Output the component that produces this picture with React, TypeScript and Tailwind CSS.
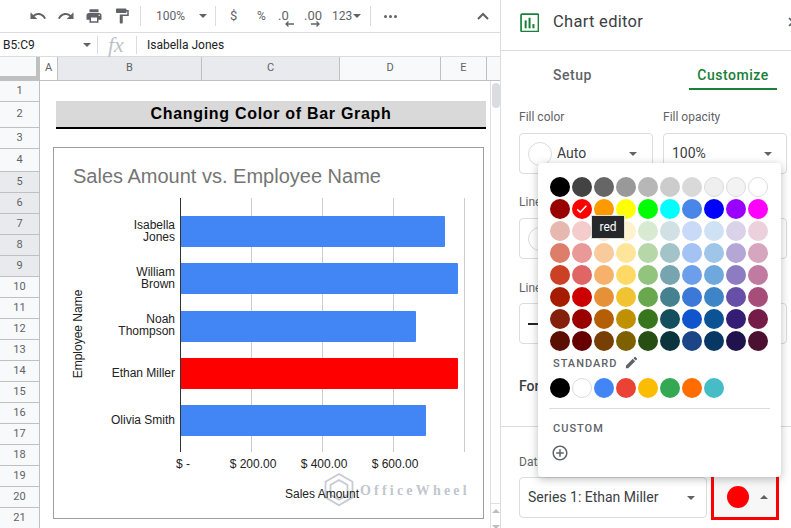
import React from "react";

const P = {
  undo: "M12.5 8c-2.65 0-5.05.99-6.9 2.6L2 7v9h9l-3.62-3.62c1.39-1.16 3.16-1.88 5.12-1.88 3.54 0 6.55 2.31 7.6 5.5l2.37-.78C21.08 11.03 17.15 8 12.5 8z",
  redo: "M18.4 10.6C16.55 8.99 14.15 8 11.5 8c-4.65 0-8.58 3.03-9.96 7.22L3.9 16c1.05-3.19 4.05-5.5 7.6-5.5 1.95 0 3.73.72 5.12 1.88L13 16h9V7l-3.6 3.6z",
  print: "M19 8H5c-1.66 0-3 1.34-3 3v6h4v4h12v-4h4v-6c0-1.66-1.34-3-3-3zm-3 11H8v-5h8v5zm3-7c-.55 0-1-.45-1-1s.45-1 1-1 1 .45 1 1-.45 1-1 1zm-1-9H6v4h12V3z",
  paint: "M18 4V3c0-.55-.45-1-1-1H5c-.55 0-1 .45-1 1v4c0 .55.45 1 1 1h12c.55 0 1-.45 1-1V6h1v4H9v11c0 .55.45 1 1 1h2c.55 0 1-.45 1-1v-9h8V4h-3z",
  edit: "M3 17.25V21h3.75L17.81 9.94l-3.75-3.75L3 17.25zM20.71 7.04c.39-.39.39-1.02 0-1.41l-2.34-2.34c-.39-.39-1.02-.39-1.41 0l-1.83 1.83 3.75 3.75 1.83-1.83z",
  add: "M13 7h-2v4H7v2h4v4h2v-4h4v-2h-4V7zm-1-5C6.48 2 2 6.48 2 12s4.48 10 10 10 10-4.48 10-10S17.52 2 12 2zm0 18c-4.41 0-8-3.59-8-8s3.59-8 8-8 8 3.59 8 8-3.59 8-8 8z",
};

function Icon({ d, size = 18, cls = "" }: { d: string; size?: number; cls?: string }) {
  return (
    <svg viewBox="0 0 24 24" width={size} height={size} className={"fill-[#5f6368] shrink-0 " + cls}>
      <path d={d} />
    </svg>
  );
}

const Caret = ({ cls = "" }: { cls?: string }) => (
  <span className={"block w-0 h-0 border-l-[4px] border-r-[4px] border-t-[4px] border-l-transparent border-r-transparent border-t-[#5f6368] shrink-0 " + cls} />
);

const Sep = ({ cls = "" }: { cls?: string }) => <span className={"block w-px h-[20px] bg-[#dadce0] shrink-0 " + cls} />;

const palette = [
  ["#000000", "#434343", "#666666", "#999999", "#b7b7b7", "#cccccc", "#d9d9d9", "#efefef", "#f3f3f3", "#ffffff"],
  ["#980000", "#ff0000", "#ff9900", "#ffff00", "#00ff00", "#00ffff", "#4a86e8", "#0000ff", "#9900ff", "#ff00ff"],
  ["#e6b8af", "#f4cccc", "#fce5cd", "#fff2cc", "#d9ead3", "#d0e0e3", "#c9daf8", "#cfe2f3", "#d9d2e9", "#ead1dc"],
  ["#dd7e6b", "#ea9999", "#f9cb9c", "#ffe599", "#b6d7a8", "#a2c4c9", "#a4c2f4", "#9fc5e8", "#b4a7d6", "#d5a6bd"],
  ["#cc4125", "#e06666", "#f6b26b", "#ffd966", "#93c47d", "#76a5af", "#6d9eeb", "#6fa8dc", "#8e7cc3", "#c27ba0"],
  ["#a61c00", "#cc0000", "#e69138", "#f1c232", "#6aa84f", "#45818e", "#3c78d8", "#3d85c6", "#674ea7", "#a64d79"],
  ["#85200c", "#990000", "#b45f06", "#bf9000", "#38761d", "#134f5c", "#1155cc", "#0b5394", "#351c75", "#741b47"],
  ["#5b0f00", "#660000", "#783f04", "#7f6000", "#274e13", "#0c343d", "#1c4587", "#073763", "#20124d", "#4c1130"],
];
const standard = ["#000000", "#ffffff", "#4285f4", "#ea4335", "#fbbc04", "#34a853", "#ff6d01", "#46bdc6"];

function Swatch({ c, checked }: { c: string; checked?: boolean }) {
  const light = ["#ffffff", "#f3f3f3", "#efefef", "#d9d9d9"].includes(c);
  return (
    <span
      className={"flex items-center justify-center w-[20px] h-[20px] rounded-full " + (light ? "border border-[#dadce0]" : "")}
      style={{ backgroundColor: c }}
    >
      {checked && (
        <svg viewBox="0 0 16 16" width="14" height="14" fill="none" stroke="#fff" strokeWidth="1.8">
          <path d="M2.5 8.5l3.5 3.2 7-7.5" />
        </svg>
      )}
    </span>
  );
}

const rows: [string, number, boolean][] = [
  ["1", 21, false], ["2", 26, false], ["3", 21, false], ["4", 23, false], ["5", 21, true], ["6", 21, true],
  ["7", 21, true], ["8", 21, true], ["9", 21, true], ["10", 21, false], ["11", 21, false], ["12", 21, false],
  ["13", 21, false], ["14", 21, false], ["15", 21, false], ["16", 21, false], ["17", 21, false], ["18", 21, false],
  ["19", 21, false], ["20", 21, false], ["21", 21, false],
];

const cols: [string, string, string][] = [
  ["A", "w-[18px]", "bg-white"],
  ["B", "w-[144px]", "bg-[#e8eaed]"],
  ["C", "w-[138px]", "bg-[#e8eaed]"],
  ["D", "w-[101px]", "bg-[#f8f9fa]"],
  ["E", "w-[46px]", "bg-[#f8f9fa]"],
];

function Chart() {
  const bars: [number, number, string][] = [
    [216, 445, "#4285f4"],
    [263, 458, "#4285f4"],
    [311, 416, "#4285f4"],
    [358, 458, "#ff0000"],
    [405, 426, "#4285f4"],
  ];
  const ox = 53;
  const oy = 147;
  const labels: [string, number][] = [
    ["Isabella", 229], ["Jones", 241], ["William", 276], ["Brown", 288], ["Noah", 323], ["Thompson", 335], ["Ethan Miller", 377], ["Olivia Smith", 424],
  ];
  const ticks: [string, number][] = [["$ 200.00", 253], ["$ 400.00", 324], ["$ 600.00", 395]];
  return (
    <svg width="431" height="372" viewBox={`${ox} ${oy} 431 372`} className="block" style={{ fontFamily: '"Liberation Sans", Arial, sans-serif' }}>
      <rect x="53.5" y="147.5" width="430" height="371" fill="#fff" stroke="#9e9e9e" />
      <text x="73" y="183" fontSize="20" fill="#757575">Sales Amount vs. Employee Name</text>
      {[251.5, 322.5, 393.5, 464.5].map((x) => (
        <line key={x} x1={x} x2={x} y1="198" y2="452" stroke="#cccccc" />
      ))}
      {bars.map(([y, end, c]) => (
        <path key={y} d={`M181 ${y}H${end - 1}a1 1 0 0 1 1 1V${y + 30}a1 1 0 0 1 -1 1H181z`} fill={c} />
      ))}
      <line x1="180.5" x2="180.5" y1="198" y2="452" stroke="#333333" />
      {labels.map(([t, y]) => (
        <text key={t} x="175" y={y} fontSize="12" textAnchor="end" fill="#222222">{t}</text>
      ))}
      <text x="176" y="468" fontSize="12" fill="#222222">$ -</text>
      {ticks.map(([t, x]) => (
        <text key={t} x={x} y="468" fontSize="12" textAnchor="middle" fill="#222222">{t}</text>
      ))}
      <text x="0" y="0" fontSize="12" textAnchor="middle" fill="#222222" transform="translate(82 334) rotate(-90)">Employee Name</text>
      <g opacity="0.5" fill="none" stroke="#8f98a8" strokeWidth="1.8">
        <path d="M339 474l13.5 7.8v15.6L339 505.2l-13.5-7.8v-15.6z" />
        <path d="M339 480l8.5 4.9v9.8l-8.5 4.9-8.5-4.9v-9.8z" />
      </g>
      <text x="360" y="495" fontSize="14" fontWeight="700" letterSpacing="3.2" fill="#8f98a8" opacity="0.55" style={{ fontFamily: '"Liberation Serif", serif' }}>OfficeWheel</text>
      <text x="285" y="498" fontSize="12" fill="#222222">Sales Amount</text>
    </svg>
  );
}

function Box({ w, children, cls = "" }: { w: string; children?: React.ReactNode; cls?: string }) {
  return <div className={"h-[41px] rounded border border-[#dadce0] flex items-center bg-white shrink-0 " + w + " " + cls}>{children}</div>;
}

const Arrow = ({ left }: { left?: boolean }) => (
  <svg viewBox="0 0 9 6" width="9" height="6" className="absolute left-[7px] top-[17px]" fill="none" stroke="#5f6368" strokeWidth="1.3">
    <path d={left ? "M9 3H1M3.5 .5L1 3l2.5 2.5" : "M0 3h8M5.5 .5L8 3 5.5 5.5"} />
  </svg>
);

export default function App() {
  return (
    <div className="w-[791px] h-[528px] flex overflow-hidden bg-white text-[#3c4043]" style={{ fontFamily: 'Roboto, "Liberation Sans", sans-serif' }}>
      {/* Sheet */}
      <div className="w-[500px] shrink-0 flex flex-col">
        <div className="h-[33px] border-b border-[#dadce0] flex items-center pl-[29px] shrink-0 text-[#5f6368]">
          <Icon d={P.undo} />
          <Icon d={P.redo} cls="ml-[10px]" />
          <Icon d={P.print} cls="ml-[10px]" />
          <Icon d={P.paint} cls="ml-[10px]" />
          <Sep cls="ml-[9px]" />
          <span className="ml-[15px] text-[12px] w-[30px]">100%</span>
          <Caret cls="ml-[13px]" />
          <Sep cls="ml-[8px]" />
          <span className="ml-[14px] w-[8px] text-[13px]">$</span>
          <span className="ml-[19px] w-[9px] text-[12px]">%</span>
          <span className="ml-[12px] w-[14px] h-[24px] relative text-[13px] leading-[24px]">
            .0
            <Arrow left />
          </span>
          <span className="ml-[12px] w-[18px] h-[24px] relative text-[13px] leading-[24px]">
            .00
            <Arrow />
          </span>
          <span className="ml-[10px] text-[12px] w-[20px]">123</span>
          <Caret cls="ml-[1px]" />
          <Sep cls="ml-[9px]" />
          <span className="ml-[13px] flex gap-[2px]">
            <span className="w-[3px] h-[3px] rounded-full bg-[#5f6368]" />
            <span className="w-[3px] h-[3px] rounded-full bg-[#5f6368]" />
            <span className="w-[3px] h-[3px] rounded-full bg-[#5f6368]" />
          </span>
          <svg viewBox="0 0 12 8" width="12" height="8" className="ml-[80px]" fill="none" stroke="#5f6368" strokeWidth="2">
            <path d="M1 7l5-5 5 5" />
          </svg>
        </div>
        <div className="h-[24px] border-b border-[#dadce0] flex items-center shrink-0 text-[12px] text-[#202124]">
          <span className="ml-[3px] w-[80px]">B5:C9</span>
          <Caret cls="ml-[0px]" />
          <span className="block w-px h-[18px] bg-[#dadce0] ml-[6px]" />
          <span className="ml-[10px] w-[17px] text-[22px] leading-[22px] italic text-[#bdc1c6]" style={{ fontFamily: '"Liberation Serif", serif' }}>fx</span>
          <span className="block w-px h-[18px] bg-[#dadce0] ml-[11px]" />
          <span className="ml-[10px]">Isabella Jones</span>
        </div>
        <div className="h-[24px] flex shrink-0 text-[11px] text-[#5f6368] border-b border-[#c0c0c0]">
          <div className="w-[40px] shrink-0 bg-[#f8f9fa] border-r-[4px] border-b-[4px] border-[#c0c0c0]" />
          {cols.map(([n, w, bg]) => (
            <div key={n} className={"flex items-center justify-center shrink-0 border-r border-[#c0c0c0] " + w + " " + bg}>{n}</div>
          ))}
          <div className="flex-1 bg-[#f8f9fa]" />
        </div>
        <div className="flex-1 flex min-h-0">
          <div className="w-[40px] shrink-0 flex flex-col border-r border-[#c0c0c0]">
            {rows.map(([n, h, sel]) => (
              <div
                key={n}
                className={"shrink-0 flex items-center justify-center text-[11px] text-[#5f6368] border-b border-[#c0c0c0] " + (sel ? "bg-[#e8eaed]" : "bg-[#f8f9fa]")}
                style={{ height: h }}
              >
                {n}
              </div>
            ))}
          </div>
          <div className="w-[450px] shrink-0 pt-[20px] overflow-hidden">
            <div className="ml-[16px] w-[430px] h-[28px] bg-[#d9d9d9] border-b-2 border-black flex items-center justify-center text-[16px] tracking-[0.7px] font-bold text-black" style={{ fontFamily: '"Liberation Sans", Arial, sans-serif' }}>
              Changing Color of Bar Graph
            </div>
            <div className="ml-[13px] mt-[18px]">
              <Chart />
            </div>
          </div>
          <div className="flex-1 flex flex-col border-l border-[#e0e0e0]">
            <div className="flex-1 pt-[2px] pl-px">
              <div className="w-[8px] h-[25px] rounded bg-[#dadce0]" />
            </div>
            <div className="h-[25px] flex flex-col items-center border-t border-[#e0e0e0] text-[#9e9e9e]">
              <span className="block mt-[5px] w-0 h-0 border-l-[4px] border-r-[4px] border-b-[4px] border-l-transparent border-r-transparent border-b-[#bdbdbd]" />
              <span className="block mt-[12px] w-0 h-0 border-l-[4px] border-r-[4px] border-t-[4px] border-l-transparent border-r-transparent border-t-[#bdbdbd]" />
            </div>
          </div>
        </div>
      </div>

      {/* Editor */}
      <div className="relative w-[291px] shrink-0 border-l border-[#dadce0] flex flex-col overflow-hidden">
        <div className="h-[51px] border-b border-[#dadce0] flex items-center shrink-0 pl-[19px] pb-[6px]">
          <svg viewBox="0 0 18 18" width="19" height="19" className="shrink-0">
            <rect x="1" y="1" width="16.5" height="16.5" rx="1" fill="none" stroke="#188038" strokeWidth="1.6" />
            <rect x="4.4" y="7" width="1.9" height="7.5" fill="#188038" />
            <rect x="8.1" y="4.5" width="1.9" height="10" fill="#188038" />
            <rect x="11.8" y="10.5" width="1.9" height="4" fill="#188038" />
          </svg>
          <span className="ml-[14px] w-[92px] shrink-0 whitespace-nowrap text-[16.5px] text-[#3c4043] tracking-[0.3px]">Chart editor</span>
          <svg viewBox="0 0 10 10" width="10" height="10" className="ml-[143px] shrink-0" fill="none" stroke="#5f6368" strokeWidth="1.6">
            <path d="M1 1l8 8M9 1l-8 8" />
          </svg>
        </div>
        <div className="h-[39px] flex shrink-0 text-[14px] font-medium tracking-[0.5px]">
          <div className="ml-[52px] mt-[14px] w-[41px] text-[#5f6368]">Setup</div>
          <div className="ml-[95px] w-[88px] flex flex-col items-center border-b-[2px] border-[#188038] text-[#188038] pt-[14px]">Customize</div>
        </div>
        <div className="pl-[18px] pt-[20px] flex flex-col shrink-0">
          <div className="flex gap-[10px] text-[12px] text-[#5f6368] h-[14px] leading-[14px]">
            <span className="w-[134px]">Fill color</span>
            <span>Fill opacity</span>
          </div>
          <div className="flex gap-[10px] mt-[9px]">
            <Box w="w-[134px]" cls="pl-[8px] text-[14px]">
              <span className="block w-[24px] h-[24px] rounded-full border border-[#dadce0]" />
              <span className="ml-[5px]">Auto</span>
              <Caret cls="ml-[43px]" />
            </Box>
            <Box w="w-[124px]" cls="pl-[8px] text-[14px]">
              100%
              <Caret cls="ml-[58px]" />
            </Box>
          </div>
          <div className="text-[12px] text-[#5f6368] mt-[21px] h-[14px] leading-[14px]">Line</div>
          <div className="flex gap-[10px] mt-[9px]">
            <Box w="w-[134px]" cls="pl-[8px]">
              <span className="block w-[24px] h-[24px] rounded-full border border-[#dadce0]" />
            </Box>
            <Box w="w-[124px]" />
          </div>
          <div className="text-[12px] text-[#5f6368] mt-[22px] h-[14px] leading-[14px]">Line</div>
          <div className="flex gap-[10px] mt-[8px]">
            <Box w="w-[134px]" cls="pl-[8px]">
              <span className="block w-[10px] h-[2px] bg-[#202124]" />
            </Box>
            <Box w="w-[124px]" />
          </div>
          <div className="flex items-center mt-[30px] h-[24px]">
            <span className="text-[14px] font-medium text-[#3c4043] w-[120px]">Format</span>
            <div className="h-[24px] w-[138px] border border-[#dadce0] rounded" />
          </div>
        </div>
        <div className="mt-[28px] border-t border-[#dadce0] pl-[18px] pt-[28px] flex-1">
          <div className="text-[12px] text-[#5f6368] h-[14px] leading-[14px]">Data point</div>
          <div className="flex mt-[8px] items-start">
            <Box w="w-[188px]" cls="pl-[8px] text-[14px]">
              Series 1: Ethan Miller
              <Caret cls="ml-[29px]" />
            </Box>
            <div className="-mt-[4px] ml-[4px] w-[68px] h-[47px] border-[3px] border-[#ff0000] bg-[#f7f7f7] flex items-center shrink-0">
              <span className="block ml-[13px] w-[22px] h-[22px] rounded-full bg-[#ff0000]" />
              <span className="block ml-[11px] w-0 h-0 border-l-[4px] border-r-[4px] border-b-[4px] border-l-transparent border-r-transparent border-b-[#5f6368]" />
            </div>
          </div>
        </div>

        {/* Popup */}
        <div className="absolute left-[37px] top-[163px] w-[243px] h-[314px] bg-white rounded shadow-[0_2px_8px_rgba(60,64,67,0.35)] pt-[14px] pl-[12px]">
          <div className="flex flex-col gap-[2px]">
            {palette.map((row, i) => (
              <div key={i} className="flex gap-[2px]">
                {row.map((c, j) => (
                  <Swatch key={j} c={c} checked={i === 1 && j === 1} />
                ))}
              </div>
            ))}
          </div>
          <div className="flex items-center mt-[5px] pl-[3px] h-[16px] text-[11px] font-medium tracking-[1px] text-[#5f6368]">
            STANDARD
            <Icon d={P.edit} size={15} cls="ml-[7px] -mt-[3px]" />
          </div>
          <div className="flex gap-[2px] mt-[6px]">
            {standard.map((c) => (
              <Swatch key={c} c={c} />
            ))}
          </div>
          <div className="h-px bg-[#dadce0] w-[221px] -ml-[1px] mt-[10px]" />
          <div className="pl-[3px] mt-[13px] h-[14px] leading-[14px] text-[11px] font-medium tracking-[1px] text-[#5f6368]">CUSTOM</div>
          <Icon d={P.add} size={18} cls="mt-[8px] ml-[1px]" />
        </div>

        {/* Tooltip */}
        <div className="absolute left-[90px] top-[215px] w-[34px] h-[24px] bg-[#26272b] border border-[#e0e0e0] flex items-center justify-center text-[12px] text-white">
          red
        </div>
      </div>
    </div>
  );
}
